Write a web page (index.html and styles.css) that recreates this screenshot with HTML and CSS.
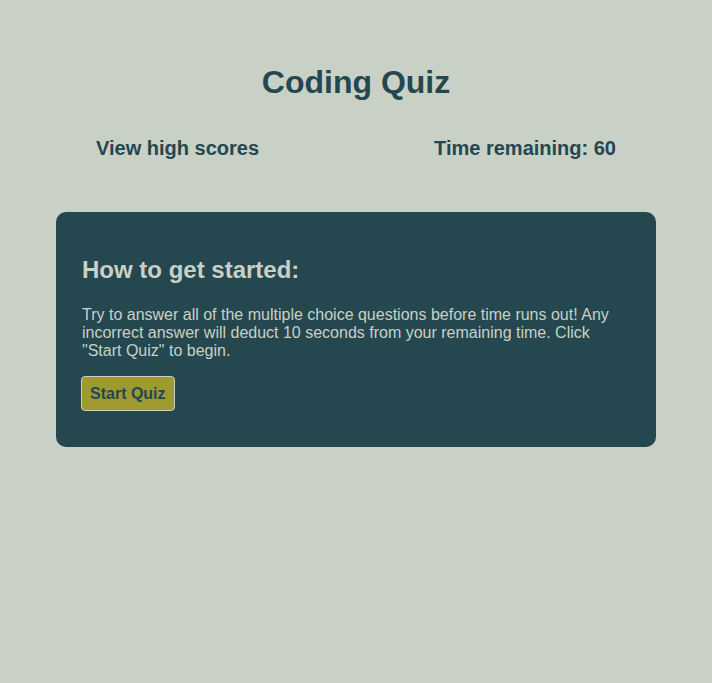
FILE: index.html
```html
<!DOCTYPE html>
<html lang="en">
<head>
<meta charset="utf-8">
<title>Coding Quiz</title>
<link rel="stylesheet" href="styles.css">
</head>
<body>
<header class="header">
  <h1 class="title">Coding Quiz</h1>
  <nav class="nav">
    <a class="nav-link" href="#">View high scores</a>
    <span class="timer">Time remaining: 60</span>
  </nav>
</header>
<main class="card">
  <h2 class="card-title">How to get started:</h2>
  <p class="card-text">Try to answer all of the multiple choice questions before time runs out! Any incorrect answer will deduct 10 seconds from your remaining time. Click "Start Quiz" to begin.</p>
  <button class="start-btn">Start Quiz</button>
</main>
</body>
</html>
```
FILE: styles.css
```css
html, body {
  margin: 0;
  padding: 0;
}
body {
  background: #c9d1c6;
  font-family: "Liberation Sans", Arial, sans-serif;
  color: #25474f;
}
.header {
  padding-top: 64px;
}
.title {
  margin: 0;
  text-align: center;
  font-size: 32px;
  font-weight: bold;
  color: #25474f;
}
.nav {
  display: flex;
  justify-content: space-between;
  padding: 0 96px;
  margin-top: 36px;
  font-size: 20px;
  font-weight: bold;
}
.nav-link {
  color: #25474f;
  text-decoration: none;
}
.timer {
  color: #25474f;
}
.card {
  display: block;
  width: 600px;
  box-sizing: border-box;
  margin: 52px auto 0;
  background: #25474f;
  border-radius: 10px;
  padding: 24px 26px 36px 26px;
  color: #c9d1c6;
}
.card-title {
  margin: 20px 0 22px;
  font-size: 24px;
  font-weight: bold;
}
.card-text {
  margin: 0 0 16px;
  font-size: 16px;
  line-height: 18px;
}
.start-btn {
  display: block;
  font-family: "Liberation Sans", Arial, sans-serif;
  font-size: 16px;
  line-height: 19px;
  font-weight: bold;
  color: #25474f;
  background: #9d9a2f;
  border: 1px solid #c9cfc6;
  border-radius: 4px;
  padding: 7px 8px;
  margin-left: -1px;
  cursor: pointer;
}
```
